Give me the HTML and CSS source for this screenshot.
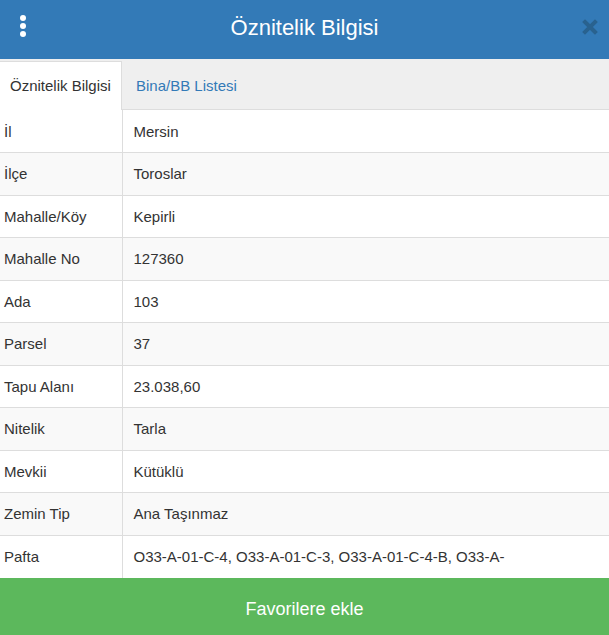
FILE: index.html
```html
<!DOCTYPE html>
<html lang="tr">
<head>
    <meta charset="UTF-8">
    <meta name="viewport" content="width=device-width, initial-scale=1.0">
    <title>Öznitelik Bilgisi</title>
    <link rel="stylesheet" href="styles.css">
</head>
<body>
    <div class="panel">
        <div class="header">
            <span class="menu">
                <span class="dot"></span>
                <span class="dot"></span>
                <span class="dot"></span>
            </span>
            <h2>Öznitelik Bilgisi</h2>
            <span class="close">
                <svg width="16" height="16" viewBox="0 0 16 16">
                    <path d="M3 3 L13 13 M13 3 L3 13" stroke="#29628f" stroke-width="4" stroke-linecap="square"/>
                </svg>
            </span>
        </div>

        <div class="tabs">
            <div class="tab active">Öznitelik Bilgisi</div>
            <div class="tab">Bina/BB Listesi</div>
        </div>

        <table class="info">
            <tr><td class="key">İl</td><td>Mersin</td></tr>
            <tr><td class="key">İlçe</td><td>Toroslar</td></tr>
            <tr><td class="key">Mahalle/Köy</td><td>Kepirli</td></tr>
            <tr><td class="key">Mahalle No</td><td>127360</td></tr>
            <tr><td class="key">Ada</td><td>103</td></tr>
            <tr><td class="key">Parsel</td><td>37</td></tr>
            <tr><td class="key">Tapu Alanı</td><td>23.038,60</td></tr>
            <tr><td class="key">Nitelik</td><td>Tarla</td></tr>
            <tr><td class="key">Mevkii</td><td>Kütüklü</td></tr>
            <tr><td class="key">Zemin Tip</td><td>Ana Taşınmaz</td></tr>
            <tr><td class="key">Pafta</td><td>O33-A-01-C-4, O33-A-01-C-3, O33-A-01-C-4-B, O33-A-</td></tr>
        </table>

        <button class="fav">Favorilere ekle</button>
    </div>
</body>
</html>
```

FILE: styles.css
```css
body {
    margin: 0;
    font-family: "Liberation Sans", Arial, sans-serif;
    color: #333;
    background-color: white;
}
.panel {
    width: 609px;
    height: 635px;
    display: flex;
    flex-direction: column;
    overflow: hidden;
}
.header {
    height: 59px;
    box-sizing: border-box;
    padding-bottom: 4px;
    background-color: #337ab7;
    display: flex;
    align-items: center;
    justify-content: center;
    position: relative;
    flex-shrink: 0;
}
.header h2 {
    margin: 0;
    color: white;
    font-size: 22px;
    font-weight: normal;
}
.menu {
    position: absolute;
    left: 20px;
    top: 15px;
    display: flex;
    flex-direction: column;
    gap: 2px;
}
.dot {
    width: 6px;
    height: 6px;
    border-radius: 50%;
    background-color: white;
}
.close {
    position: absolute;
    right: 11px;
    top: 19px;
    display: flex;
}
.tabs {
    height: 50px;
    background-color: #efefef;
    border-bottom: 1px solid #ddd;
    display: flex;
    align-items: flex-end;
    flex-shrink: 0;
}
.tab {
    height: 48px;
    line-height: 48px;
    font-size: 15px;
    padding: 0 14px;
    color: #337ab7;
    margin-bottom: -1px;
}
.tab.active {
    background-color: white;
    color: #333;
    padding: 0 10px;
    width: 101px;
    border-top: 1px solid #ddd;
    border-right: 1px solid #ddd;
}
.info {
    width: 100%;
    border-collapse: collapse;
    font-size: 15px;
}
.info td {
    height: 42.5px;
    padding: 0 11px;
    border-top: 1px solid #ddd;
    box-sizing: border-box;
    white-space: nowrap;
}
.info tr:first-child td {
    border-top: none;
}
.info tr:nth-child(even) {
    background-color: #f9f9f9;
}
.info td.key {
    width: 122px;
    padding-left: 4px;
    border-right: 1px solid #ddd;
}
.fav {
    margin-top: auto;
    height: 57px;
    flex-shrink: 0;
    border: none;
    padding: 5px 0 0;
    background-color: #5cb85c;
    color: white;
    font-family: "Liberation Sans", Arial, sans-serif;
    font-size: 18px;
    width: 100%;
}
```
